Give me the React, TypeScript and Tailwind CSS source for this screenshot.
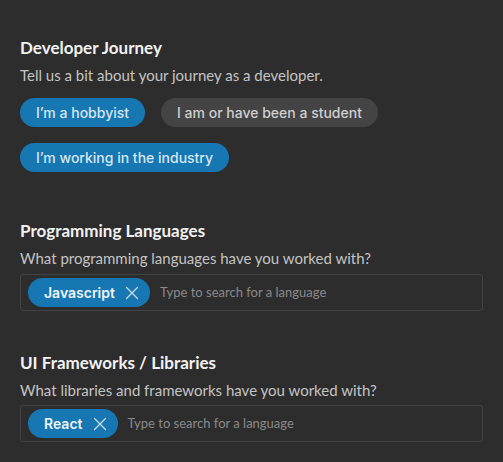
import { X } from 'lucide-react';

const sans = { fontFamily: 'Lato, "Noto Sans", sans-serif' };

function Pill({ label, active }: { label: string; active?: boolean }) {
    return (
        <button
            className={`h-[29px] px-4 rounded-full text-[14px] font-medium font-[Inter,sans-serif] ${
                active ? 'bg-[#1677b3] text-[#d7e6f0]' : 'bg-[#444444] text-[#cfcfcf]'
            }`}
        >
            {label}
        </button>
    );
}

function TagInput({ tag }: { tag: string }) {
    return (
        <div className="flex items-center gap-2.5 h-[37px] px-[7px] border border-[#434343] rounded-[3px]">
            <span className="flex items-center gap-[6px] h-[29px] pl-4 pr-[7px] rounded-full bg-[#1677b3] text-[#eef4f8] text-[14px] font-semibold font-[Inter,sans-serif]">
                {tag}
                <X className="w-[22px] h-[22px] text-[#c9dce9]" strokeWidth={1.4} />
            </span>
            <span className="text-[13px] text-[#8a8a8a]" style={sans}>
                Type to search for a language
            </span>
        </div>
    );
}

function Section({
    title,
    subtitle,
    gap,
    children,
}: {
    title: string;
    subtitle: string;
    gap: string;
    children: React.ReactNode;
}) {
    return (
        <section className="flex flex-col">
            <h2 className="text-[17px] font-bold text-[#f2f2f2] leading-6">{title}</h2>
            <p className="mt-[5px] text-[15px] text-[#c4c4c4] leading-5">{subtitle}</p>
            <div className={gap}>{children}</div>
        </section>
    );
}

export default function App() {
    return (
        <div className="w-[503px] h-[462px] bg-[#2d2d2d] px-5 pt-[36px] flex flex-col gap-[40px]" style={sans}>
            <Section title="Developer Journey" subtitle="Tell us a bit about your journey as a developer." gap="mt-[13px] mb-[7px]">
                <div className="flex flex-wrap gap-4">
                    <Pill label="I’m a hobbyist" active />
                    <Pill label="I am or have been a student" />
                    <Pill label="I’m working in the industry" active />
                </div>
            </Section>
            <Section title="Programming Languages" subtitle="What programming languages have you worked with?" gap="mt-[6px]">
                <TagInput tag="Javascript" />
            </Section>
            <Section title="UI Frameworks / Libraries" subtitle="What libraries and frameworks have you worked with?" gap="mt-[5px]">
                <TagInput tag="React" />
            </Section>
        </div>
    );
}
